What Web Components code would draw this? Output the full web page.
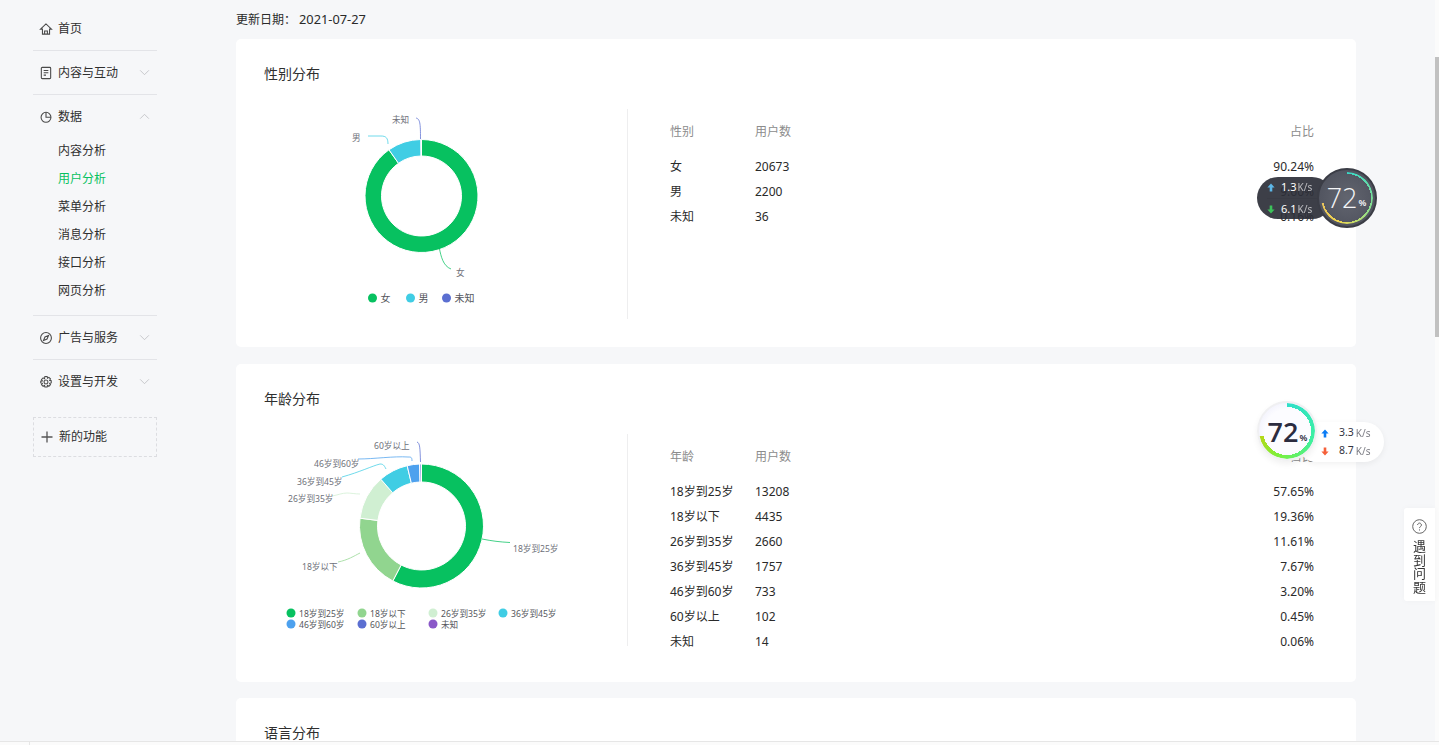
<!DOCTYPE html>
<html lang="zh">
<head>
<meta charset="utf-8">
<title>用户分析</title>
<style>
  html, body { margin: 0; height: 100%; overflow: hidden; }
  body {
    background: #f6f7f9;
    color: #2a2a2a;
    font: 12px/1.5 "Noto Sans", "Noto Sans CJK SC", sans-serif;
  }
</style>
</head>
<body>
<app-shell>
  <side-menu slot="side"></side-menu>
  <update-line date="2021-07-27"></update-line>
  <stat-card heading="性别分布" chart-height="210">
    <donut-chart slot="chart" id="gender"></donut-chart>
    <stat-table head="性别" id="genderTable"></stat-table>
  </stat-card>
  <stat-card heading="年龄分布" chart-height="212">
    <donut-chart slot="chart" id="age"></donut-chart>
    <stat-table head="年龄" id="ageTable"></stat-table>
  </stat-card>
  <stat-card heading="语言分布" chart-height="210"></stat-card>
</app-shell>
<speed-ball dark style="left:1257px;top:168px"></speed-ball>
<speed-ball style="left:1257px;top:401px"></speed-ball>
<help-tab></help-tab>
<page-edge></page-edge>

<script>
// small helper so the classes below stay short
function shadow(el, html) {
  el.attachShadow({ mode: "open" }).innerHTML = html
}

const icons = {
  home: '<path d="M7.5 2 1.6 7.6h2.1V13h7.6V7.6h2.1zM6 13V9.6h3V13"/>',
  doc: '<rect x="2.5" y="1.5" width="10" height="12" rx="1"/><path d="M5 4.8h5M5 7.3h5M5 9.8h2.5"/>',
  pie: '<circle cx="7.5" cy="7.8" r="5.3"/><path d="M7.5 2.5v5.3h5.3"/>',
  compass: '<circle cx="7.5" cy="7.5" r="5.8"/><path d="M10.2 4.8 8.6 8.6 4.8 10.2 6.4 6.4z"/>',
  gear: '<circle cx="7.5" cy="7.5" r="2.1"/><path d="M6.3 1.7h2.4l.4 1.7 1.5-.9 1.7 1.7-.9 1.5 1.7.4v2.4l-1.7.4.9 1.5-1.7 1.7-1.5-.9-.4 1.7H6.3l-.4-1.7-1.5.9-1.7-1.7.9-1.5-1.7-.4V6.7l1.7-.4-.9-1.5 1.7-1.7 1.5.9z"/>'
}

customElements.define("app-shell", class extends HTMLElement {
  constructor() {
    super()
    shadow(this, `
      <style>
        :host { display: flex; height: 745px; overflow: hidden; }
        aside { flex: 0 0 236px; }
        main { flex: 0 0 1120px; }
      </style>
      <aside><slot name="side"></slot></aside>
      <main><slot></slot></main>`)
  }
})

customElements.define("update-line", class extends HTMLElement {
  constructor() {
    super()
    shadow(this, `
      <style>
        :host { display: block; height: 39px; line-height: 37px; white-space: nowrap; }
        .c { font-family: "Noto Sans CJK TC", sans-serif; }
        .d { font-size: 12.8px; margin-left: 3px; }
      </style>
      更新日期<span class="c">：</span><span class="d">${this.getAttribute("date")}</span>`)
  }
})

customElements.define("side-menu", class extends HTMLElement {
  constructor() {
    super()
    const group = (icon, label, arrow) => `
      <div class="row">
        <svg class="ico" viewBox="0 0 15 15">${icons[icon]}</svg>
        <span>${label}</span>
        ${arrow ? `<svg class="arrow" viewBox="0 0 12 8"><path d="${arrow == "up" ? "M1 6.5 6 1.5l5 5" : "M1 1.5l5 5 5-5"}"/></svg>` : ""}
      </div>`
    const subs = ["内容分析", "用户分析", "菜单分析", "消息分析", "接口分析", "网页分析"]
      .map(s => `<a class="${s == "用户分析" ? "on" : ""}">${s}</a>`).join("")
    shadow(this, `
      <style>
        :host { display: block; padding: 7px 79px 0 33px; color: #2f2f2f; }
        section { border-bottom: 1px solid #e3e4e8; }
        section.last { border: 0; }
        .row { display: flex; align-items: center; height: 43px; padding-left: 6px; }
        .ico { width: 14px; height: 14px; margin-right: 5px; fill: none; stroke: #4a4a4a; stroke-width: 1.15; }
        .arrow { width: 11px; height: 7px; margin-left: auto; margin-right: 7px; fill: none; stroke: #c0c1c5; stroke-width: 1; }
        .subs { display: flex; flex-direction: column; margin-top: -1px; padding: 0 0 10px 25px; }
        .subs a { height: 28px; line-height: 28px; }
        .subs .on { color: #07c160; }
        .add { display: flex; align-items: center; height: 38px; margin-top: 14px; padding-left: 7px;
          border: 1px dashed #dcdde1; }
        .add svg { width: 12px; height: 12px; margin-right: 6px; stroke: #555; stroke-width: 1.3; fill: none; }
      </style>
      <section>${group("home", "首页")}</section>
      <section>${group("doc", "内容与互动", "down")}</section>
      <section>${group("pie", "数据", "up")}<div class="subs">${subs}</div></section>
      <section>${group("compass", "广告与服务", "down")}</section>
      <section class="last">${group("gear", "设置与开发", "down")}</section>
      <div class="add"><svg viewBox="0 0 12 12"><path d="M6 .5v11M.5 6h11"/></svg>新的功能</div>`)
  }
})

customElements.define("stat-card", class extends HTMLElement {
  constructor() {
    super()
    const h = this.getAttribute("chart-height")
    shadow(this, `
      <style>
        :host { display: block; background: #fff; border-radius: 5px; padding: 24px 42px 28px 28px; margin-bottom: 16.5px; }
        h3 { margin: 0 0 24px; font-size: 14px; font-weight: 400; line-height: 22px; color: #2f2f2f; }
        .body { display: flex; align-items: flex-start; }
        .chart { flex: 0 0 363px; height: ${h}px; border-right: 1px solid #eeeeef; }
        .data { flex: 1; padding: 1px 0 0 42px; }
      </style>
      <h3>${this.getAttribute("heading")}</h3>
      <div class="body">
        <div class="chart"><slot name="chart"></slot></div>
        <div class="data"><slot></slot></div>
      </div>`)
  }
})

customElements.define("stat-table", class extends HTMLElement {
  setRows(rows) {
    const cells = rows.map(r => `<div class="r"><span>${r[0]}</span><span>${r[1]}</span><span>${r[2]}</span></div>`).join("")
    shadow(this, `
      <style>
        :host { display: block; color: #2a2a2a; }
        .r { display: grid; grid-template-columns: 85px 1fr auto; height: 25px; line-height: 25px; }
        .h { height: 44px; line-height: 44px; color: #8c8c8c; }
      </style>
      <div class="r h"><span>${this.getAttribute("head")}</span><span>用户数</span><span>占比</span></div>
      ${cells}`)
  }
})

customElements.define("donut-chart", class extends HTMLElement {
  // opts: cx, cy, r0, r1, h, parts[{v,c,name,line,tx,ty}], legend[{x,y,name,c}]
  draw(o) {
    const pt = (a, r) => [o.cx + r * Math.sin(a), o.cy - r * Math.cos(a)]
    let a = 0, out = ""
    for (const p of o.parts) {
      const b = a + p.v / 100 * Math.PI * 2
      const big = b - a > Math.PI ? 1 : 0
      const s1 = pt(a, o.r1), e1 = pt(b, o.r1), s0 = pt(b, o.r0), e0 = pt(a, o.r0)
      out += `<path fill="${p.c}" stroke="#fff" stroke-width="1" d="M${s1}A${o.r1} ${o.r1} 0 ${big} 1 ${e1}L${s0}A${o.r0} ${o.r0} 0 ${big} 0 ${e0}Z"/>`
      a = b
    }
    for (const p of o.parts) {
      if (p.line) out += `<path fill="none" stroke="${p.c}" stroke-opacity=".75" d="${p.line}"/>`
      if (p.tx) out += `<text x="${p.tx}" y="${p.ty}" class="lab">${p.name}</text>`
    }
    for (const l of o.legend) {
      out += `<circle cx="${l.x}" cy="${l.y}" r="${o.dot}" fill="${l.c}"/><text x="${l.x + o.dot + 3.5}" y="${l.y + 3.5}" class="leg" style="font-size:${o.legendSize}px">${l.name}</text>`
    }
    shadow(this, `
      <style>
        :host { display: block; height: 100%; }
        svg { display: block; width: 100%; height: 100%; overflow: visible; }
        text { font-family: "Noto Sans", "Noto Sans CJK SC", sans-serif; }
        .lab { font-size: 8.6px; fill: #6e7079; }
        .leg { fill: #55565c; }
      </style>
      <svg viewBox="0 0 363 ${o.h}">${out}</svg>`)
  }
})

customElements.define("speed-ball", class extends HTMLElement {
  constructor() {
    super()
    const dark = this.hasAttribute("dark")
    shadow(this, `
      <style>
        :host { position: absolute; display: block; width: 128px; height: 62px; z-index: 5; }
        .pill { position: absolute; top: ${dark ? 9 : 21}px; left: ${dark ? 0 : 40}px; width: ${dark ? 76 : 87}px;
          height: ${dark ? 42 : 40}px; border-radius: 21px; box-sizing: border-box;
          background: ${dark ? "rgba(45,47,56,.92)" : "#fff"};
          ${dark ? "" : "box-shadow: 0 2px 6px rgba(0,0,0,.06);"}
          display: grid; grid-template-rows: 1fr 1fr; padding: ${dark ? "0 0 0 10px" : "2px 0 2px 24px"};
          color: ${dark ? "#fff" : "#33343f"}; font-size: ${dark ? 11 : 10.5}px; }
        .pill div { display: flex; align-items: center; white-space: nowrap; }
        .pill i { font-style: normal; opacity: .65; margin-left: ${dark ? 1 : 2}px; font-size: 10px; }
        .pill div + div { ${dark ? "border-top: 1px solid #3a3c45;" : ""} }
        .pill svg { width: 8px; height: 9px; margin-right: ${dark ? 6 : 10}px; }
        .ball { position: absolute; left: ${dark ? 60 : 0}px; top: 0; width: 60px; height: 60px; border-radius: 50%;
          background: ${dark ? "radial-gradient(#62656f, #4b4e5a)" : "radial-gradient(#fcfcff 55%, #e6e6fa)"};
          box-sizing: border-box; border: ${dark ? "2px solid #3b3d46" : "2px solid #f0f0f2"};
          ${dark ? "" : "box-shadow: 0 3px 6px rgba(0,0,0,.06);"}
          display: flex; align-items: center; justify-content: center; padding-bottom: ${dark ? 2 : 0}px;
          color: ${dark ? "#f4f5f7" : "#2c2c40"}; }
        .ring { position: absolute; inset: ${dark ? "2px" : "0"}; border-radius: 50%;
          background: conic-gradient(${dark ? "#37d9c8 0deg, #8fe08a 120deg, #f0d64e 200deg, #e8c25c 259deg" : "#2fdfc9 0deg, #3ef0a0 110deg, #7cf03c 200deg, #b5d818 259deg"}, transparent 259deg);
          -webkit-mask: radial-gradient(closest-side, transparent calc(100% - ${dark ? 2 : 4}px), #000 calc(100% - ${dark ? 2 : 4}px)); }
        b { font-weight: ${dark ? 300 : 600}; font-size: 27px; line-height: 1; position: relative; z-index: 1; margin-left: ${dark ? -1 : 1}px; font-family: "Open Sans", "Noto Sans", sans-serif; }
        small { font-size: 9px; font-weight: 600; margin-left: 1px; align-self: flex-end; margin-bottom: 15px; position: relative; z-index: 1; }
      </style>
      <div class="pill">
        <div><svg viewBox="0 0 8 9"><path fill="${dark ? "#5db7e8" : "#0a7cf5"}" d="M4 .5 7.6 4.5H5.3V8.5H2.7V4.5H.4z"/></svg>${dark ? "1.3" : "3.3"}<i>K/s</i></div>
        <div><svg viewBox="0 0 8 9"><path fill="${dark ? "#3cc25a" : "#f5603a"}" d="M4 8.5 .4 4.5H2.7V.5H5.3V4.5H7.6z"/></svg>${dark ? "6.1" : "8.7"}<i>K/s</i></div>
      </div>
      <div class="ball"><div class="ring"></div><b>72</b><small>%</small></div>`)
  }
})

customElements.define("help-tab", class extends HTMLElement {
  constructor() {
    super()
    shadow(this, `
      <style>
        :host { position: absolute; left: 1404px; top: 508px; width: 31px; height: 93px; background: #fff;
          border-radius: 3px 0 0 3px; box-shadow: 0 0 6px rgba(0,0,0,.03); display: flex; flex-direction: column; align-items: center;
          padding-top: 11px; box-sizing: border-box; color: #353535; z-index: 4; }
        svg { width: 15px; height: 15px; margin-bottom: 6px; flex: none; }
        span { width: 13px; line-height: 13.5px; font-size: 13px; }
      </style>
      <svg viewBox="0 0 15 15" fill="none" stroke="#666"><circle cx="7.5" cy="7.5" r="6.8"/><path d="M5.6 6a1.9 1.9 0 1 1 2.9 1.6c-.7.4-1 .8-1 1.5M7.5 10.4v1.1"/></svg>
      <span>遇到问题</span>`)
  }
})

customElements.define("page-edge", class extends HTMLElement {
  constructor() {
    super()
    shadow(this, `
      <style>
        :host { display: block; }
        .track { position: fixed; right: 0; top: 0; bottom: 0; width: 4px; background: #fbfbfb; }
        .thumb { position: absolute; left: 0; right: 0; top: 57px; height: 280px; background: #c1c1c1; }
        .line { position: fixed; left: 0; right: 0; bottom: 0; height: 3px; background: #fbfbfb; border-top: 1px solid #e6e6e6; }
        .tick { position: absolute; left: 29px; top: 0; bottom: 0; width: 1px; background: #e6e6e6; }
      </style>
      <div class="track"><div class="thumb"></div></div>
      <div class="line"><div class="tick"></div></div>`)
  }
})

const G = "#07c160", L = "#91d58f", P = "#d0efd2", C = "#40cde4", B = "#4da1ee", I = "#5b6fd1", V = "#8a58c8"

document.getElementById("gender").draw({
  cx: 157.5, cy: 87, r0: 40, r1: 56.5, h: 210, dot: 4.5, legendSize: 10,
  parts: [
    { v: 90.24, c: G, name: "女", line: "M175.5 140C177 147 179 157 187 160", tx: 192, ty: 166.5 },
    { v: 9.6, c: C, name: "男", line: "M104 27H117C122 27 124 29 124 35", tx: 88, ty: 32 },
    { v: .16, c: I, name: "未知", line: "M152 9C156 10 156.5 14 156.5 30", tx: 128, ty: 14 }
  ],
  legend: [
    { x: 108.5, y: 189, c: G, name: "女" },
    { x: 146.5, y: 189, c: C, name: "男" },
    { x: 182.5, y: 189, c: I, name: "未知" }
  ]
})

document.getElementById("age").draw({
  cx: 157.5, cy: 92, r0: 44, r1: 62, h: 212, dot: 4.5, legendSize: 8.6,
  parts: [
    { v: 57.65, c: G, name: "18岁到25岁", line: "M218 105C228 107 236 108 246 108.5", tx: 249, ty: 118 },
    { v: 19.36, c: L, name: "18岁以下", line: "M96 119C90 122 84 126 74 128", tx: 38, ty: 136 },
    { v: 11.61, c: P, name: "26岁到35岁", line: "M96 60C92 60 86 59 83 59C78 59 74 61 68 62", tx: 24, ty: 68 },
    { v: 7.67, c: C, name: "36岁到45岁", line: "M122 35C120 31 119 30 116 30C108 32 96 38 78 43", tx: 33, ty: 51 },
    { v: 3.2, c: B, name: "46岁到60岁", line: "M148 27C148 23 147 23 144 23C130 22 110 25 94 25", tx: 50, ty: 33 },
    { v: .45, c: I, name: "60岁以上", tx: 110, ty: 15, line: "M153 8C156 9 156 14 156.5 28" },
    { v: .06, c: V, name: "未知" }
  ],
  legend: [
    { x: 27, y: 179, c: G, name: "18岁到25岁" },
    { x: 98, y: 179, c: L, name: "18岁以下" },
    { x: 169, y: 179, c: P, name: "26岁到35岁" },
    { x: 239, y: 179, c: C, name: "36岁到45岁" },
    { x: 27, y: 190, c: B, name: "46岁到60岁" },
    { x: 98, y: 190, c: I, name: "60岁以上" },
    { x: 169, y: 190, c: V, name: "未知" }
  ]
})

document.getElementById("genderTable").setRows([
  ["女", "20673", "90.24%"], ["男", "2200", "9.60%"], ["未知", "36", "0.16%"]
])
document.getElementById("ageTable").setRows([
  ["18岁到25岁", "13208", "57.65%"], ["18岁以下", "4435", "19.36%"], ["26岁到35岁", "2660", "11.61%"],
  ["36岁到45岁", "1757", "7.67%"], ["46岁到60岁", "733", "3.20%"], ["60岁以上", "102", "0.45%"], ["未知", "14", "0.06%"]
])
</script>
</body>
</html>
